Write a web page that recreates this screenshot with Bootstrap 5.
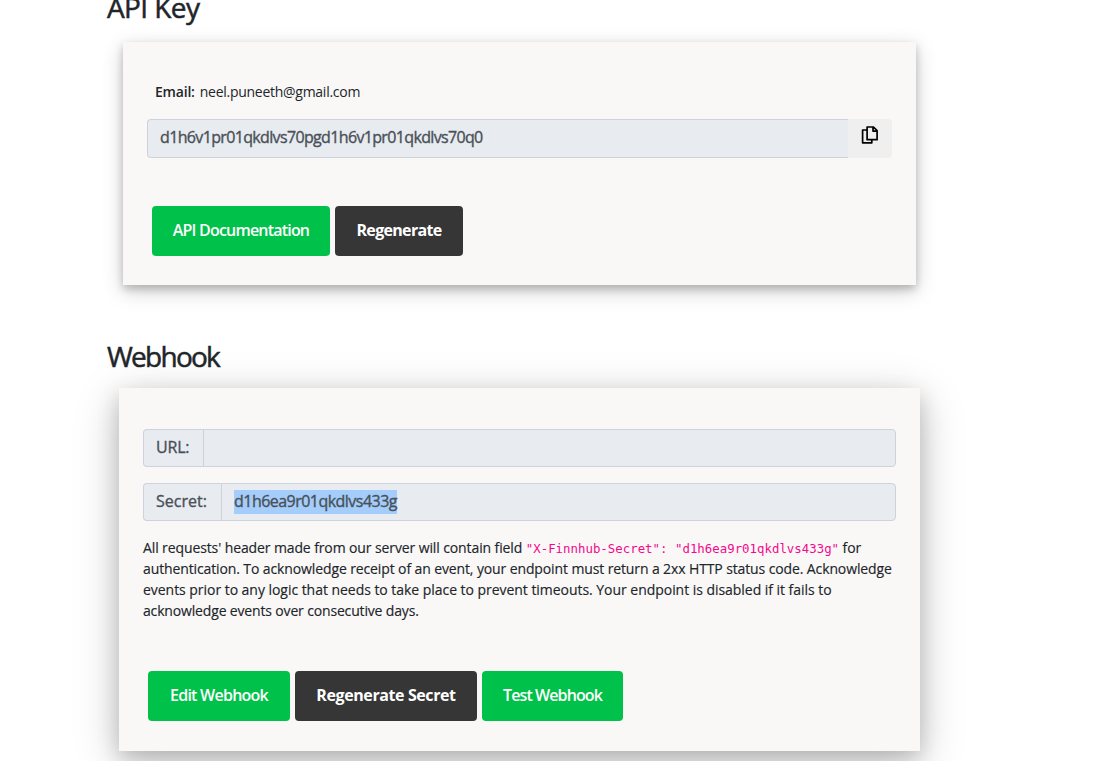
<!DOCTYPE html>
<html lang="en">
<head>
<meta charset="utf-8">
<meta name="viewport" content="width=device-width, initial-scale=1">
<title>API Key and Webhook</title>
<link href="https://cdn.jsdelivr.net/npm/bootstrap@5.3.0/dist/css/bootstrap.min.css" rel="stylesheet">
<style>
body{font-family:"Trebuchet MS","Open Sans",sans-serif;font-size:14px;line-height:21px;color:#212529;background:#fff;height:761px;overflow:hidden}
.settings{width:813px;margin-left:107px}
.settings h3{font-size:28px;line-height:34px;font-weight:400;margin:0;-webkit-text-stroke:.5px currentColor}
.panel{background:#f9f8f7;border:0;border-radius:0}
.panel-key{width:793px;height:243px;margin-left:16px;padding:0 24px;box-shadow:0 4px 8px rgba(0,0,0,.2),0 6px 20px rgba(0,0,0,.19)}
.panel-hook{width:801px;height:363px;margin-left:12px;padding:0 24px;box-shadow:0 8px 20px rgba(0,0,0,.17),0 10px 42px rgba(0,0,0,.22)}
.input-group{height:38px}
.input-group .form-control,.input-group .input-group-text{background:#e8ebf0;border-color:#cdd3dc;color:#495057;font-size:16px;font-weight:400;line-height:24px;padding:5px 12px 7px;border-radius:4px;-webkit-text-stroke:.35px currentColor}
.input-group>.input-group-text{border-right:0;border-top-right-radius:0;border-bottom-right-radius:0}
.panel-hook .form-control{border-top-left-radius:0;border-bottom-left-radius:0}
.copy-btn{width:44px;background:#efefef;border:0;border-radius:0 4px 4px 0;padding:0 0 7px}
.action{height:50px;border:0;border-radius:4px;padding:0;color:#fff!important;font-size:16px;font-weight:700;line-height:48px}
.go{background:#00c24a!important}
.dark-action{background:#363636!important}
.selected{background:linear-gradient(#a4cdfb,#a4cdfb) 0 1px no-repeat;display:inline-block;line-height:24px;padding-bottom:1px}
.note{-webkit-text-stroke:.15px currentColor}
.note span{white-space:nowrap;display:block;height:21px}
.note code{font-family:"DejaVu Sans Mono",monospace;font-size:12.4px;letter-spacing:0;line-height:1;color:#f5088e;-webkit-text-stroke:0}
</style>
</head>
<body>
<main class="settings">
  <section>
    <h3 style="letter-spacing:-.6px;margin-top:-10px">API Key</h3>
    <div class="panel panel-key" style="margin-top:18px">
      <div style="padding:39px 8px 17px"><b style="letter-spacing:-.2px;font-weight:600">Email:</b><span style="letter-spacing:-.27px;margin-left:5px">neel.puneeth@gmail.com</span></div>
      <div class="input-group flex-nowrap" style="height:39px">
        <div class="form-control rounded-end-0 border-end-0" style="letter-spacing:-.65px">d1h6v1pr01qkdlvs70pgd1h6v1pr01qkdlvs70q0</div>
        <button class="btn copy-btn flex-shrink-0 d-flex align-items-center justify-content-center" aria-label="Copy">
          <svg width="18" height="18" viewBox="0 0 18 18" fill="none" stroke="#000" stroke-width="1.7" stroke-linejoin="round"><path d="M5.8 4H1.6v12.8h9.2v-2.6M6.1 1h6.4l3.6 3.6v9.1h-10zM12 1.2v3.9H16"/></svg>
        </button>
      </div>
      <div class="d-flex" style="margin:48px 0 0 5px;gap:5px">
        <a class="btn action go" style="width:178px;letter-spacing:-.8px;font-weight:600">API Documentation</a>
        <a class="btn action dark-action" style="width:128px;letter-spacing:-.68px">Regenerate</a>
      </div>
    </div>
  </section>
  <section style="margin-top:54px">
    <h3 style="letter-spacing:-1.75px">Webhook</h3>
    <div class="panel panel-hook" style="margin-top:15px;padding-top:41px">
      <div class="input-group flex-nowrap" style="width:753px">
        <span class="input-group-text" style="width:61px;letter-spacing:-.2px">URL:</span>
        <div class="form-control"></div>
      </div>
      <div class="input-group flex-nowrap" style="width:753px;margin-top:16px">
        <span class="input-group-text" style="width:79px">Secret:</span>
        <div class="form-control"><span class="selected" style="letter-spacing:-.53px">d1h6ea9r01qkdlvs433g</span></div>
      </div>
      <p class="note mb-0" style="margin-top:16px">
        <span style="letter-spacing:-.11px">All requests' header made from our server will contain field <code>"X-Finnhub-Secret": "d1h6ea9r01qkdlvs433g"</code> for</span>
        <span style="letter-spacing:-.117px">authentication. To acknowledge receipt of an event, your endpoint must return a 2xx HTTP status code. Acknowledge</span>
        <span style="letter-spacing:-.04px">events prior to any logic that needs to take place to prevent timeouts. Your endpoint is disabled if it fails to</span>
        <span style="letter-spacing:-.16px">acknowledge events over consecutive days.</span>
      </p>
      <div class="d-flex" style="margin:50px 0 0 5px;gap:5px">
        <a class="btn action go" style="width:142px;letter-spacing:-.75px;font-weight:600">Edit Webhook</a>
        <a class="btn action dark-action" style="width:182px;letter-spacing:-.4px">Regenerate Secret</a>
        <a class="btn action go" style="width:141px;letter-spacing:-.9px;font-weight:600">Test Webhook</a>
      </div>
    </div>
  </section>
</main>
<script src="https://cdn.jsdelivr.net/npm/bootstrap@5.3.0/dist/js/bootstrap.bundle.min.js"></script>
</body>
</html>
